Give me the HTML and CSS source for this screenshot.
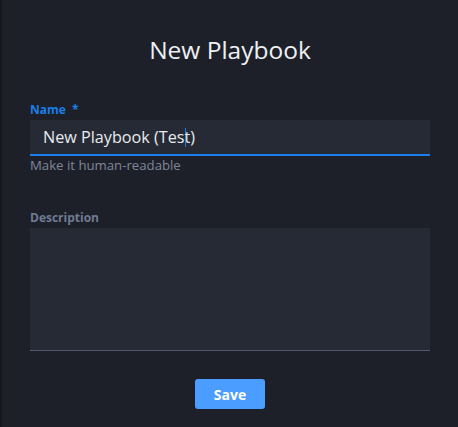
FILE: index.html
```html
<!DOCTYPE html>
<html>
<head>
<meta charset="utf-8">
<link rel="stylesheet" href="styles.css">
</head>
<body>
<div class="backdrop">
  <div class="modal">
    <h1 class="title">New Playbook</h1>
    <div class="field">
      <label class="label label-active">Name <span class="req">*</span></label>
      <div class="input input-focus"><span class="value">New Playbook (Tes<span class="caret"></span>t)</span></div>
      <div class="hint">Make it human-readable</div>
    </div>
    <div class="field field-desc">
      <label class="label">Description</label>
      <div class="textarea"></div>
    </div>
    <div class="actions">
      <button class="btn">Save</button>
    </div>
  </div>
</div>
</body>
</html>
```
FILE: styles.css
```css
html, body {
  margin: 0;
  padding: 0;
  background: #15171d;
  font-family: "Open Sans", "Noto Sans", sans-serif;
}
.backdrop {
  width: 458px;
  height: 427px;
  display: flex;
  padding-left: 2px;
  box-sizing: border-box;
}
.modal {
  flex: 1;
  background: #1d2029;
  padding: 0 28px 0 28px;
  display: flex;
  flex-direction: column;
}
.title {
  margin: 32px 0 0 0;
  text-align: center;
  font-size: 24.5px;
  font-weight: 400;
  color: #eef0f4;
  line-height: 36px;
  height: 36px;
}
.field {
  margin-top: 34px;
  display: flex;
  flex-direction: column;
}
.field-desc {
  margin-top: 36px;
}
.label {
  font-size: 12px;
  font-weight: 700;
  color: #6f7b94;
  line-height: 16px;
  height: 16px;
}
.label-active {
  color: #1a7fe8;
}
.req {
  margin-left: 3px;
}
.input {
  margin-top: 2px;
  height: 34px;
  background: #262a35;
  border-bottom: 2px solid #1a7fe8;
  display: flex;
  align-items: center;
  padding-left: 13px;
}
.value {
  font-size: 16.2px;
  color: #e8eaef;
}
.caret {
  display: inline-block;
  width: 1px;
  height: 19px;
  background: #1a7fe8;
  vertical-align: -4px;
  margin-right: -1px;
}
.hint {
  margin-top: 0;
  font-size: 13.2px;
  color: #7f8799;
  line-height: 18px;
}
.textarea {
  margin-top: 2px;
  height: 122px;
  background: #262a35;
  border-bottom: 1px solid #4f5a72;
}
.actions {
  margin-top: 28px;
  display: flex;
  justify-content: center;
}
.btn {
  width: 70px;
  height: 30px;
  border: none;
  border-radius: 3px;
  background: #4b9dff;
  color: #ffffff;
  font-family: "Open Sans", "Noto Sans", sans-serif;
  font-weight: 700;
  font-size: 14px;
  padding: 0;
}
```
